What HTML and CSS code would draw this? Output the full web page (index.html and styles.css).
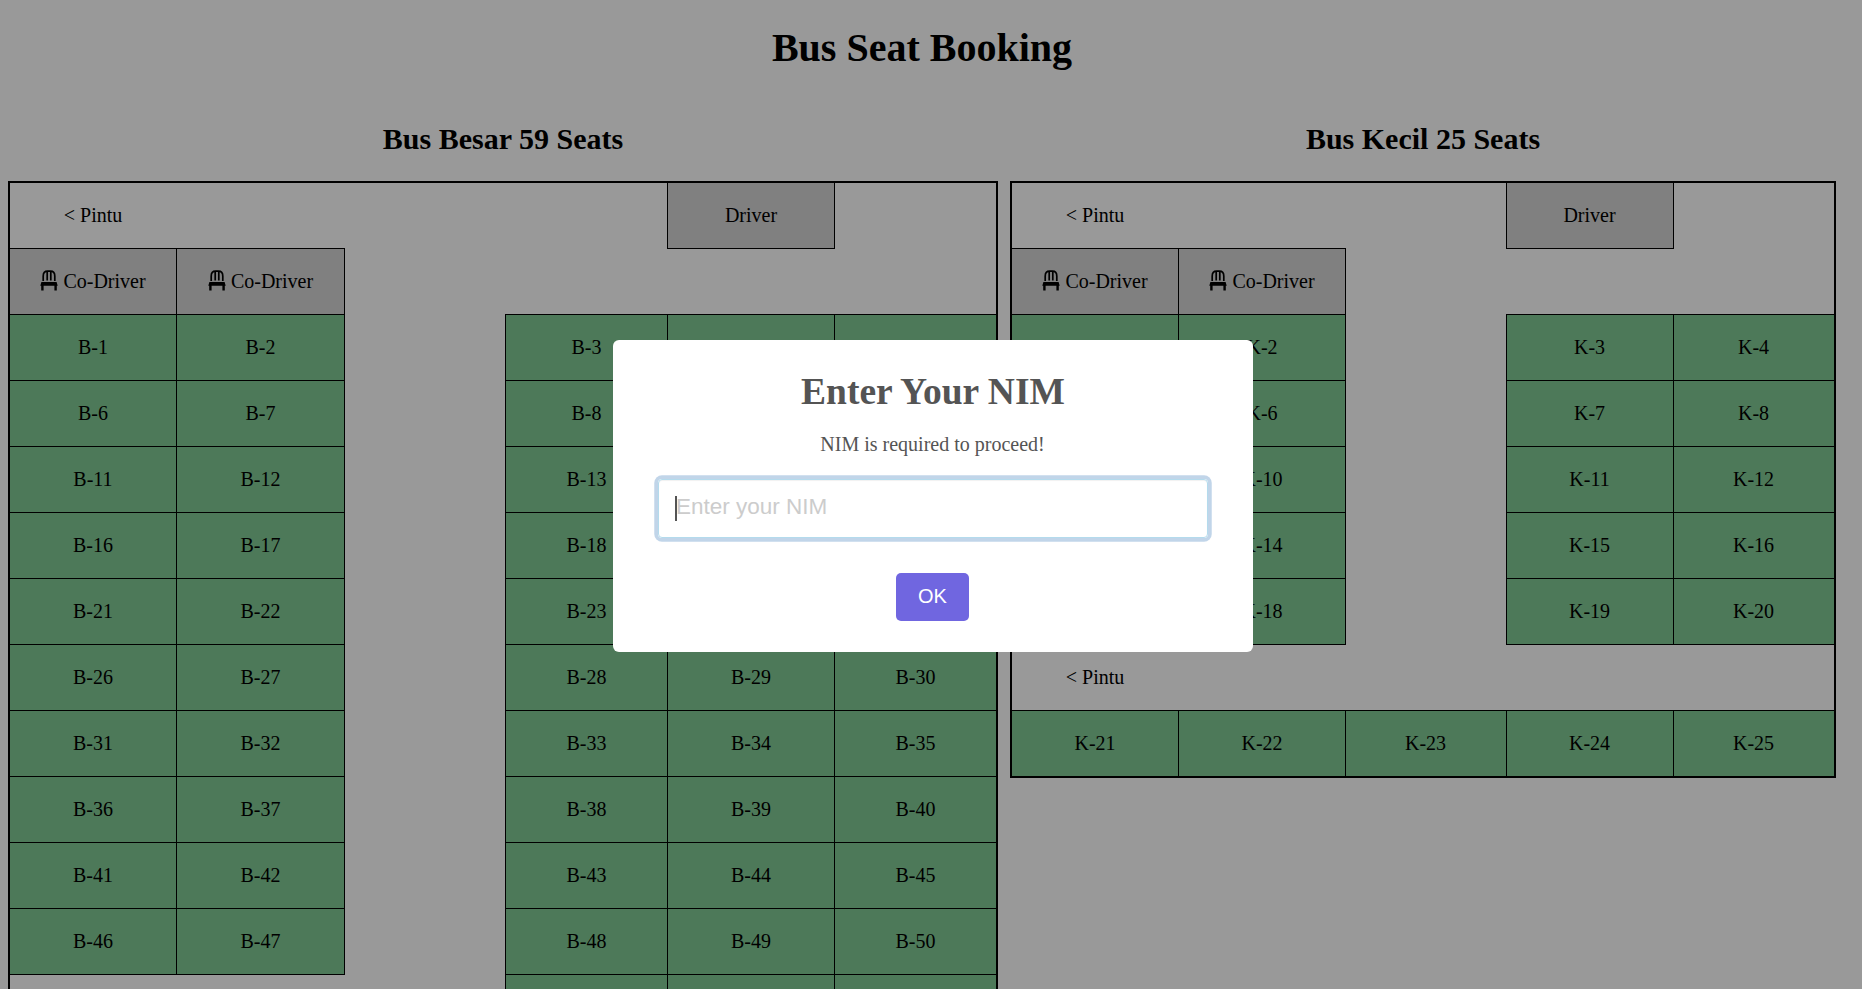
FILE: index.html
```html
<!DOCTYPE html>
<html lang="id">
<head>
<meta charset="utf-8">
<title>Bus Seat Booking</title>
<link rel="stylesheet" href="styles.css">
</head>
<body>
<svg class="defs" width="0" height="0">
  <symbol id="chair" viewBox="0 0 18 21">
    <path d="M3.2 11V6.2C3.2 3 5.2 1.2 7.6 1.2h2.8c2.4 0 4.4 1.8 4.4 5V11M7.2 1.5V10.5M10.8 1.5V10.5" fill="none" stroke="#000" stroke-width="1.7"/>
    <path d="M1.4 12h15.2l1.1 3.8H.3zM1.2 15h2.4v5.6H1.2zM14.4 15h2.4v5.6h-2.4z"/>
  </symbol>
</svg>
<h1 class="page-title">Bus Seat Booking</h1>
<main class="buses">
  <section class="bus bus-large">
    <h2 class="bus-title">Bus Besar 59 Seats</h2>
    <div class="frame"><div class="seats" id="large"></div></div>
  </section>
  <section class="bus bus-small">
    <h2 class="bus-title">Bus Kecil 25 Seats</h2>
    <div class="frame"><div class="seats" id="small"></div></div>
  </section>
</main>
<div class="overlay">
  <div class="modal" role="dialog">
    <h2 class="modal-title">Enter Your NIM</h2>
    <div class="modal-text">NIM is required to proceed!</div>
    <div class="field"><span class="caret"></span><span class="placeholder">Enter your NIM</span></div>
    <button class="ok">OK</button>
  </div>
</div>
<script src="seats.js"></script>
</body>
</html>
```
FILE: styles.css
```css
html { height: 100%; overflow: hidden; }
body {
  height: 100%;
  margin: 0;
  overflow: hidden;
  font: 20px/23px "Liberation Serif", "Times New Roman", serif;
  color: #000;
  background: #fff;
}
.defs { position: absolute; }
.page-title {
  width: 1828px;
  margin: 0 0 0 8px;
  padding-top: 25px;
  font-size: 40px;
  line-height: 46px;
  text-align: center;
}
.buses { display: flex; gap: 12px; padding: 51px 0 0 8px; align-items: flex-start; }
.bus { flex: none; }
.bus-large { width: 990px; }
.bus-small { width: 826px; }
.bus-title { margin: 0 0 25px; font-size: 30px; line-height: 34px; text-align: center; }
.frame { border: 2px solid #000; }
.seats { display: grid; grid-auto-rows: 66px; margin: -1px; }
.bus-large .seats { grid-template-columns: 167px 168px 161px 162px 167px 162px; }
.bus-small .seats { grid-template-columns: 167px 167px 161px 167px 161px; }
.bus-small .frame { padding-bottom: 1px; }
.cell {
  display: flex;
  align-items: center;
  justify-content: center;
  margin: 0 -1px -1px 0;
  border: 1px solid transparent;
}
.bus-small .cell:nth-child(5n),
.bus-small .cell:nth-child(5n + 3),
.bus-small .cell:nth-child(5n + 4) { padding-right: 1px; }
.seat { border-color: #000; background: #81ca94; }
.crew { border-color: #000; background: #d5d5d5; }
.chair { width: 18px; height: 21px; margin: -2px 5px 0 0; }
.overlay {
  position: fixed;
  inset: 0;
  display: flex;
  align-items: center;
  justify-content: center;
  background: rgba(0, 0, 0, 0.4);
}
.modal {
  box-sizing: border-box;
  width: 640px;
  height: 312px;
  margin: 3px 0 0 4px;
  display: flex;
  flex-direction: column;
  align-items: center;
  border-radius: 6px;
  background: #fff;
  color: #545454;
}
.modal-title { margin: 30px 0 0; font-size: 37.5px; line-height: 43px; }
.modal-text { margin: 20px 1px 0 0; }
.field {
  position: relative;
  box-sizing: border-box;
  width: 550px;
  height: 59px;
  margin-top: 23px;
  padding: 0 17px;
  border: 1px solid #b4dbed;
  border-radius: 4px;
  box-shadow: inset 0 1px 1px rgba(0, 0, 0, 0.06), 0 0 0 3.75px rgba(100, 150, 200, 0.4);
  font: 22.5px/54px "Liberation Sans", Arial, sans-serif;
  color: #ccc;
}
.caret { position: absolute; left: 16px; top: 16px; width: 2px; height: 25px; background: #545454; }
.ok {
  width: 73px;
  height: 48px;
  margin: 35px 1px 0 0;
  padding: 0 0 2px;
  border: 0;
  border-radius: 5px;
  background: #7066e0;
  color: #fff;
  font: 20px "Liberation Sans", Arial, sans-serif;
}
```
FILE: seats.js
```js
// Row notation: "<" door, "D" driver, "C" co-driver, "." aisle, "#" numbered seat
function build(id, prefix, rows) {
  let number = 0;
  const chair = '<svg class="chair"><use href="#chair"/></svg>';
  const html = [...rows.join('')].map(kind => {
    if (kind === '#') return `<div class="cell seat">${prefix}-${++number}</div>`;
    if (kind === 'C') return `<div class="cell crew">${chair}Co-Driver</div>`;
    if (kind === 'D') return '<div class="cell crew">Driver</div>';
    return `<div class="cell">${kind === '<' ? '&lt; Pintu' : ''}</div>`;
  });
  document.getElementById(id).innerHTML = html.join('');
}
build('large', 'B', ['<...D.', 'CC....', ...Array(10).fill('##.###'), '<..###', '######']);
build('small', 'K', ['<..D.', 'CC...', ...Array(5).fill('##.##'), '<....', '#####']);
```
